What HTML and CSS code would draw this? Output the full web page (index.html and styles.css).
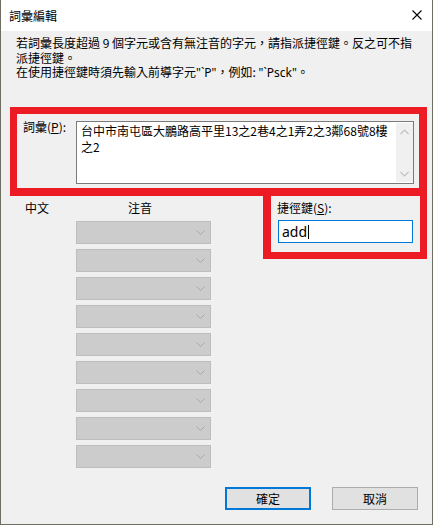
FILE: index.html
```html
<!DOCTYPE html>
<html lang="zh-Hant">
<head>
<meta charset="utf-8">
<link rel="stylesheet" href="styles.css">
</head>
<body>
<div class="window">
  <div class="titlebar">
    <span class="title">詞彙編輯</span>
    <svg class="close" width="10" height="10" viewBox="0 0 10 10"><path d="M0.5 0.5 L9.5 9.5 M9.5 0.5 L0.5 9.5" stroke="#000" stroke-width="1.1" fill="none"/></svg>
  </div>
  <div class="info">
    <div class="line">若詞彙長度超過 9 個字元或含有無注音的字元，請指派捷徑鍵。反之可不指</div>
    <div class="line">派捷徑鍵。</div>
    <div class="line">在使用捷徑鍵時須先輸入前導字元<span class="latin">"`P"</span>，例如: <span class="latin">"`Psck"</span>。</div>
  </div>
  <div class="box1">
    <div class="label1">詞彙(<u>P</u>):</div>
    <div class="textarea">
      <div class="ta-text">台中市南屯區大鵬路高平里13之2巷4之1弄2之3鄰68號8樓<br>之2</div>
      <div class="scroll">
        <svg width="9" height="6" viewBox="0 0 9 6"><path d="M0.5 5 L4.5 1 L8.5 5" stroke="#c2c2c2" stroke-width="1.2" fill="none"/></svg>
        <svg width="9" height="6" viewBox="0 0 9 6"><path d="M0.5 1 L4.5 5 L8.5 1" stroke="#c2c2c2" stroke-width="1.2" fill="none"/></svg>
      </div>
    </div>
  </div>
  <div class="lower">
    <div class="leftcol">
      <div class="heads"><span class="h-zh">中文</span><span class="h-zy">注音</span></div>
      <div class="drops">
        <div class="drop"><svg width="9" height="5" viewBox="0 0 9 5"><path d="M0.5 0.5 L4.5 4.5 L8.5 0.5" stroke="#a9a9a9" stroke-width="1" fill="none"/></svg></div>
        <div class="drop"><svg width="9" height="5" viewBox="0 0 9 5"><path d="M0.5 0.5 L4.5 4.5 L8.5 0.5" stroke="#a9a9a9" stroke-width="1" fill="none"/></svg></div>
        <div class="drop"><svg width="9" height="5" viewBox="0 0 9 5"><path d="M0.5 0.5 L4.5 4.5 L8.5 0.5" stroke="#a9a9a9" stroke-width="1" fill="none"/></svg></div>
        <div class="drop"><svg width="9" height="5" viewBox="0 0 9 5"><path d="M0.5 0.5 L4.5 4.5 L8.5 0.5" stroke="#a9a9a9" stroke-width="1" fill="none"/></svg></div>
        <div class="drop"><svg width="9" height="5" viewBox="0 0 9 5"><path d="M0.5 0.5 L4.5 4.5 L8.5 0.5" stroke="#a9a9a9" stroke-width="1" fill="none"/></svg></div>
        <div class="drop"><svg width="9" height="5" viewBox="0 0 9 5"><path d="M0.5 0.5 L4.5 4.5 L8.5 0.5" stroke="#a9a9a9" stroke-width="1" fill="none"/></svg></div>
        <div class="drop"><svg width="9" height="5" viewBox="0 0 9 5"><path d="M0.5 0.5 L4.5 4.5 L8.5 0.5" stroke="#a9a9a9" stroke-width="1" fill="none"/></svg></div>
        <div class="drop"><svg width="9" height="5" viewBox="0 0 9 5"><path d="M0.5 0.5 L4.5 4.5 L8.5 0.5" stroke="#a9a9a9" stroke-width="1" fill="none"/></svg></div>
        <div class="drop"><svg width="9" height="5" viewBox="0 0 9 5"><path d="M0.5 0.5 L4.5 4.5 L8.5 0.5" stroke="#a9a9a9" stroke-width="1" fill="none"/></svg></div>
      </div>
    </div>
    <div class="box2">
      <div class="label2">捷徑鍵(<u>S</u>):</div>
      <div class="input"><span class="val">add</span><span class="caret"></span></div>
    </div>
  </div>
  <div class="buttons">
    <div class="btn primary">確定</div>
    <div class="btn">取消</div>
  </div>
</div>
</body>
</html>
```
FILE: styles.css
```css
html, body {
  margin: 0;
  padding: 0;
  background: #f0f0f0;
}
body {
  font-family: "Noto Sans CJK TC", "Noto Sans", sans-serif;
  font-size: 12px;
  color: #000;
}
.window {
  width: 433px;
  height: 525px;
  box-sizing: border-box;
  border: 1px solid #6e6e62;
  border-top: none;
  background: #f0f0f0;
  display: flex;
  flex-direction: column;
}
.titlebar {
  height: 31px;
  flex: none;
  background: #fff;
  display: flex;
  align-items: center;
  justify-content: space-between;
  padding: 0 10px 0 8px;
}
.title {
  line-height: 14px;
}
.close {
  display: block;
  margin-top: -1px;
}
.info {
  height: 76px;
  flex: none;
  box-sizing: border-box;
  padding: 5px 0 0 15px;
}
.line {
  line-height: 14.5px;
  white-space: nowrap;
}
.latin {
  font-family: "Noto Sans", "Open Sans", sans-serif;
}
.box1 {
  flex: none;
  margin-left: 9px;
  width: 417px;
  height: 89px;
  box-sizing: border-box;
  border-style: solid;
  border-color: #ed1c24;
  border-width: 7px 8px 8px 7px;
  display: flex;
  padding: 7px 5px 4px 6px;
}
.label1 {
  width: 53px;
  flex: none;
  line-height: 12px;
}
.textarea {
  width: 338px;
  height: 63px;
  box-sizing: border-box;
  border: 1px solid #7a7a7a;
  background: #fff;
  display: flex;
}
.ta-text {
  flex: 1;
  padding: 1px 0 0 4px;
  line-height: 16px;
  white-space: nowrap;
}
.scroll {
  width: 17px;
  flex: none;
  margin: 1px 0;
  background: #f0f0f0;
  display: flex;
  flex-direction: column;
  justify-content: space-between;
  align-items: center;
  padding: 6px 0 5px;
}
.scroll svg {
  display: block;
}
.lower {
  flex: none;
  display: flex;
}
.leftcol {
  width: 262px;
  flex: none;
  padding-top: 5px;
}
.heads {
  display: flex;
  line-height: 14px;
  padding-left: 24px;
}
.h-zh {
  width: 103px;
}
.drops {
  margin-top: 6px;
  margin-left: 75px;
  display: flex;
  flex-direction: column;
  gap: 5px;
}
.drop {
  width: 135px;
  height: 23px;
  box-sizing: border-box;
  border: 1px solid #bdbdbd;
  background: #cccccc;
  display: flex;
  align-items: center;
  justify-content: flex-end;
  padding-right: 5px;
}
.drop svg {
  display: block;
}
.box2 {
  width: 164px;
  height: 63px;
  box-sizing: border-box;
  border-style: solid;
  border-color: #ed1c24;
  border-width: 0 7px 7px 8px;
  padding: 5px 0 0 6px;
}
.label2 {
  line-height: 14px;
}
.input {
  margin-top: 5px;
  margin-left: 1px;
  width: 135px;
  height: 23px;
  box-sizing: border-box;
  border: 1px solid #0078d7;
  background: #fff;
  display: flex;
  align-items: center;
  padding-left: 3px;
}
.val {
  font-family: "Noto Sans", "Open Sans", sans-serif;
  font-size: 14px;
  line-height: 16px;
}
.caret {
  width: 1px;
  height: 14px;
  background: #000;
  margin-left: 1px;
}
.buttons {
  margin-top: auto;
  display: flex;
  justify-content: flex-end;
  gap: 21px;
  padding: 0 14px 14px 0;
}
.btn {
  width: 86px;
  height: 23px;
  box-sizing: border-box;
  border: 1px solid #adadad;
  background: #e1e1e1;
  display: flex;
  align-items: center;
  justify-content: center;
  line-height: 14px;
}
.btn.primary {
  border: 2px solid #0078d7;
}
```
